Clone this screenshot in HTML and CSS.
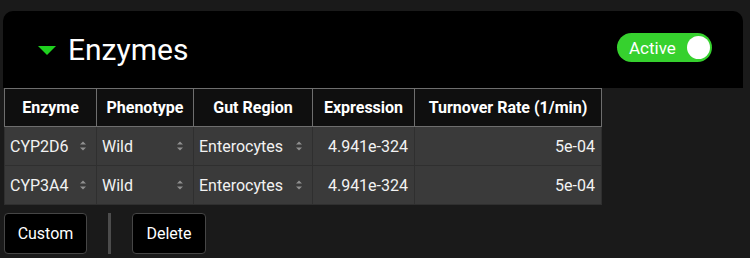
FILE: index.html
```html
<!DOCTYPE html>
<html lang="en">
<head>
  <meta charset="UTF-8">
  <title>Enzymes</title>
  <link rel="stylesheet" href="styles.css">
</head>
<body>
  <!-- section header with collapse arrow and toggle -->
  <div class="panel-head">
    <div class="title">
      <span class="caret"></span>
      <h1>Enzymes</h1>
    </div>
    <div class="toggle">
      <span>Active</span>
      <span class="knob"></span>
    </div>
  </div>

  <!-- enzyme table -->
  <table class="grid">
    <colgroup>
      <col class="c1">
      <col class="c2">
      <col class="c3">
      <col class="c4">
      <col class="c5">
    </colgroup>
    <thead>
      <tr>
        <th>Enzyme</th>
        <th>Phenotype</th>
        <th>Gut Region</th>
        <th>Expression</th>
        <th>Turnover Rate (1/min)</th>
      </tr>
    </thead>
    <tbody>
      <tr>
        <td><div class="sel">CYP2D6<svg class="spin" viewBox="0 0 8 14"><path d="M1 5.5 4 2.5 7 5.5Z M1 8.5 4 11.5 7 8.5Z"/></svg></div></td>
        <td><div class="sel">Wild<svg class="spin" viewBox="0 0 8 14"><path d="M1 5.5 4 2.5 7 5.5Z M1 8.5 4 11.5 7 8.5Z"/></svg></div></td>
        <td><div class="sel">Enterocytes<svg class="spin" viewBox="0 0 8 14"><path d="M1 5.5 4 2.5 7 5.5Z M1 8.5 4 11.5 7 8.5Z"/></svg></div></td>
        <td class="num">4.941e-324</td>
        <td class="num">5e-04</td>
      </tr>
      <tr>
        <td><div class="sel">CYP3A4<svg class="spin" viewBox="0 0 8 14"><path d="M1 5.5 4 2.5 7 5.5Z M1 8.5 4 11.5 7 8.5Z"/></svg></div></td>
        <td><div class="sel">Wild<svg class="spin" viewBox="0 0 8 14"><path d="M1 5.5 4 2.5 7 5.5Z M1 8.5 4 11.5 7 8.5Z"/></svg></div></td>
        <td><div class="sel">Enterocytes<svg class="spin" viewBox="0 0 8 14"><path d="M1 5.5 4 2.5 7 5.5Z M1 8.5 4 11.5 7 8.5Z"/></svg></div></td>
        <td class="num">4.941e-324</td>
        <td class="num">5e-04</td>
      </tr>
    </tbody>
  </table>

  <!-- row actions -->
  <div class="actions">
    <button class="btn custom">Custom</button>
    <span class="divider"></span>
    <button class="btn delete">Delete</button>
  </div>
</body>
</html>
```

FILE: styles.css
```css
body {
  margin: 0;
  padding: 11px 7px 0 3px;
  background: #1a1a1a;
  font-family: 'Roboto', 'Liberation Sans', sans-serif;
  color: #f2f2f2;
}

.panel-head {
  background: #000;
  height: 77px;
  border-radius: 10px 10px 0 0;
  display: flex;
  align-items: center;
  justify-content: space-between;
  padding: 0 31px 0 35px;
}

.title {
  display: flex;
  align-items: center;
  gap: 12px;
}

.caret {
  width: 0;
  height: 0;
  border-left: 9px solid transparent;
  border-right: 9px solid transparent;
  border-top: 9px solid #1fd11f;
  margin-top: 2px;
}

.title h1 {
  margin: 0;
  font-size: 30px;
  font-weight: 400;
  color: #fff;
}

.toggle {
  width: 95px;
  height: 29px;
  box-sizing: border-box;
  background: #36d12e;
  border-radius: 15px;
  display: flex;
  align-items: center;
  justify-content: space-between;
  padding: 0 2px 0 12px;
  margin-top: -4px;
  font-size: 17px;
  color: #fff;
}

.knob {
  width: 23px;
  height: 23px;
  border-radius: 50%;
  background: #fff;
}

.grid {
  border-collapse: collapse;
  table-layout: fixed;
  width: 597px;
  margin-left: 1px;
  font-size: 16px;
}

.c1 { width: 92px; }
.c2 { width: 97px; }
.c3 { width: 119px; }
.c4 { width: 102px; }
.c5 { width: 187px; }

.grid th {
  background: #0f0f0f;
  border: 1px solid #6e6e6e;
  height: 37px;
  padding: 0 4px;
  font-weight: 700;
  color: #fff;
  text-align: center;
  white-space: nowrap;
}

.grid td {
  background: #3a3a3a;
  border: 1px solid #2f2f2f;
  height: 39px;
  padding: 0 5px;
  box-sizing: border-box;
}

.grid td.num {
  text-align: right;
  padding-right: 6px;
}

.sel {
  display: flex;
  align-items: center;
  justify-content: space-between;
  padding-right: 4px;
}

.spin {
  width: 8px;
  height: 14px;
  fill: #909090;
}

.actions {
  display: flex;
  align-items: center;
  gap: 21px;
  margin: 8px 0 0 1px;
}

.btn {
  height: 41px;
  background: #000;
  color: #fff;
  border: 1px solid #464646;
  border-radius: 4px;
  font-family: inherit;
  font-size: 16px;
  padding: 0;
}

.custom { width: 83px; }
.delete { width: 74px; }

.divider {
  width: 3px;
  height: 41px;
  background: #4c4c4c;
}
```
